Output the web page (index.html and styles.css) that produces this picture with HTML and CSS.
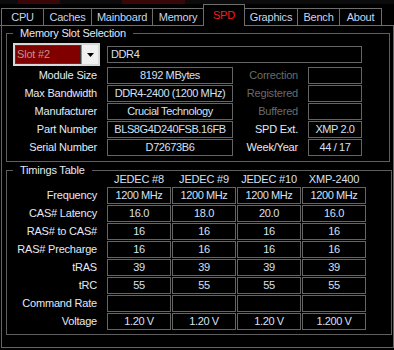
FILE: index.html
```html
<!DOCTYPE html>
<html lang="en">
<head>
  <meta charset="UTF-8">
  <meta name="viewport" content="width=device-width, initial-scale=1.0">
  <link rel="stylesheet" href="styles.css">
</head>
<body>
  <div class="window">
    <div class="topstrip"></div>

    <div class="tabs">
      <div class="tab-edge"></div>
      <div class="tab tab-cpu">CPU</div>
      <div class="tab tab-caches">Caches</div>
      <div class="tab tab-mainboard">Mainboard</div>
      <div class="tab tab-memory">Memory</div>
      <div class="tab tab-spd active">SPD</div>
      <div class="tab tab-graphics">Graphics</div>
      <div class="tab tab-bench">Bench</div>
      <div class="tab tab-about">About</div>
      <div class="tab-fill"></div>
    </div>

    <div class="panel">
      <fieldset class="group slots">
        <legend>Memory Slot Selection</legend>

        <div class="slot-row">
          <div class="select">
            <div class="select-value">Slot #2</div>
            <div class="select-arrow">
              <svg width="7" height="4" viewBox="0 0 7 4"><polygon points="0,0 7,0 3.5,4" fill="#000"/></svg>
            </div>
          </div>
          <div class="field w-type">DDR4</div>
        </div>

        <div class="row">
          <div class="label">Module Size</div>
          <div class="field w-main">8192 MBytes</div>
          <div class="rlabel dim">Correction</div>
          <div class="field w-small"></div>
        </div>
        <div class="row">
          <div class="label">Max Bandwidth</div>
          <div class="field w-main">DDR4-2400 (1200 MHz)</div>
          <div class="rlabel dim">Registered</div>
          <div class="field w-small"></div>
        </div>
        <div class="row">
          <div class="label">Manufacturer</div>
          <div class="field w-main">Crucial Technology</div>
          <div class="rlabel dim">Buffered</div>
          <div class="field w-small"></div>
        </div>
        <div class="row">
          <div class="label">Part Number</div>
          <div class="field w-main">BLS8G4D240FSB.16FB</div>
          <div class="rlabel">SPD Ext.</div>
          <div class="field w-small">XMP 2.0</div>
        </div>
        <div class="row">
          <div class="label">Serial Number</div>
          <div class="field w-main">D72673B6</div>
          <div class="rlabel">Week/Year</div>
          <div class="field w-small">44 / 17</div>
        </div>
      </fieldset>

      <fieldset class="group timings">
        <legend>Timings Table</legend>

        <div class="thead">
          <div class="label"></div>
          <div class="tcell">JEDEC #8</div>
          <div class="tcell">JEDEC #9</div>
          <div class="tcell">JEDEC #10</div>
          <div class="tcell">XMP-2400</div>
        </div>
        <div class="row">
          <div class="label">Frequency</div>
          <div class="field tcell">1200 MHz</div>
          <div class="field tcell">1200 MHz</div>
          <div class="field tcell">1200 MHz</div>
          <div class="field tcell">1200 MHz</div>
        </div>
        <div class="row">
          <div class="label">CAS# Latency</div>
          <div class="field tcell">16.0</div>
          <div class="field tcell">18.0</div>
          <div class="field tcell">20.0</div>
          <div class="field tcell">16.0</div>
        </div>
        <div class="row">
          <div class="label">RAS# to CAS#</div>
          <div class="field tcell">16</div>
          <div class="field tcell">16</div>
          <div class="field tcell">16</div>
          <div class="field tcell">16</div>
        </div>
        <div class="row">
          <div class="label">RAS# Precharge</div>
          <div class="field tcell">16</div>
          <div class="field tcell">16</div>
          <div class="field tcell">16</div>
          <div class="field tcell">16</div>
        </div>
        <div class="row">
          <div class="label">tRAS</div>
          <div class="field tcell">39</div>
          <div class="field tcell">39</div>
          <div class="field tcell">39</div>
          <div class="field tcell">39</div>
        </div>
        <div class="row">
          <div class="label">tRC</div>
          <div class="field tcell">55</div>
          <div class="field tcell">55</div>
          <div class="field tcell">55</div>
          <div class="field tcell">55</div>
        </div>
        <div class="row">
          <div class="label">Command Rate</div>
          <div class="field tcell"></div>
          <div class="field tcell"></div>
          <div class="field tcell"></div>
          <div class="field tcell"></div>
        </div>
        <div class="row">
          <div class="label">Voltage</div>
          <div class="field tcell">1.20 V</div>
          <div class="field tcell">1.20 V</div>
          <div class="field tcell">1.20 V</div>
          <div class="field tcell">1.200 V</div>
        </div>
      </fieldset>
    </div>
  </div>
</body>
</html>
```

FILE: styles.css
```css
body {
  margin: 0;
  background-color: #000;
  font-family: "Liberation Sans", Arial, sans-serif;
  font-size: 11px;
  letter-spacing: -0.2px;
  color: #e4eaf7;
}

.window {
  width: 394px;
  height: 350px;
  overflow: hidden;
  background-color: #000;
}

.topstrip {
  height: 4px;
  background: linear-gradient(to right,
    #0b0b0b 0, #0b0b0b 18px,
    #3a0709 18px, #3a0709 60px,
    #0b0b0b 60px, #0b0b0b 122px,
    #3a0709 122px, #3a0709 185px,
    #0b0b0b 185px);
}

/* tab strip */
.tabs {
  display: flex;
  align-items: flex-end;
  height: 22px;
}

.tab-edge {
  width: 1px;
  border-bottom: 1px solid #6e6e6e;
}

.tab-fill {
  flex: 1;
  border-bottom: 1px solid #6e6e6e;
}

.tab {
  box-sizing: border-box;
  height: 18px;
  border: 1px solid #6e6e6e;
  text-align: center;
  line-height: 16px;
  color: #c9d6ee;
  white-space: nowrap;
}

.tab + .tab {
  margin-left: -1px;
}

.tab.active {
  height: 22px;
  padding-top: 2px;
  border-bottom: none;
  color: #ff1a1a;
}

.tab-cpu { width: 43px; }
.tab-caches { width: 49px; }
.tab-mainboard { width: 62px; }
.tab-memory { width: 52px; }
.tab-spd { width: 42px; }
.tab-graphics { width: 54px; }
.tab-bench { width: 43px; }
.tab-about { width: 43px; }

/* main panel */
.panel {
  box-sizing: border-box;
  margin-left: 1px;
  width: 393px;
  height: 322px;
  border: 1px solid #646464;
  border-top: none;
  padding-left: 4px;
}

.group {
  box-sizing: border-box;
  margin: 0;
  padding: 0;
  min-width: 0;
  border: 1px solid #5e5e5e;
}

.group legend {
  margin-left: 6px;
  padding: 0 7px;
  line-height: 14px;
}

.slots {
  width: 384px;
  padding-bottom: 5px;
}

.timings {
  width: 386px;
  margin-top: 1px;
  padding-bottom: 4px;
}

/* rows */
.row {
  display: flex;
  height: 17px;
  margin-top: 1px;
}

.label {
  width: 90px;
  margin-right: 10px;
  text-align: right;
  line-height: 17px;
  white-space: nowrap;
}

.rlabel {
  width: 65px;
  margin-right: 10px;
  text-align: right;
  line-height: 17px;
  white-space: nowrap;
}

.rlabel.dim {
  color: #6b6b6b;
}

.field {
  box-sizing: border-box;
  height: 17px;
  border: 1px solid #646464;
  line-height: 15px;
  text-align: center;
  letter-spacing: -0.4px;
  color: #d6e0f4;
  white-space: nowrap;
  overflow: hidden;
}

.w-main { width: 126px; }
.w-small { width: 54px; }

.w-type {
  width: 255px;
  text-align: left;
  padding-left: 3px;
}

/* slot selector */
.slot-row {
  display: flex;
  align-items: center;
  height: 23px;
  margin-top: 3px;
  padding-left: 6px;
}

.select {
  box-sizing: border-box;
  display: flex;
  width: 87px;
  height: 23px;
  margin-right: 7px;
  border: 2px solid #d8d8d8;
}

.select-value {
  flex: 1;
  background-color: #800000;
  border: 1px solid #3a3a3a;
  color: #b99494;
  line-height: 17px;
  padding-left: 1px;
}

.select-arrow {
  width: 17px;
  display: flex;
  align-items: center;
  justify-content: center;
  background-color: #f0f0f0;
  border-left: 1px solid #909090;
  box-sizing: border-box;
}

/* timings table */
.thead {
  display: flex;
  height: 13px;
  margin-top: -4px;
  line-height: 13px;
}

.tcell {
  width: 64px;
  margin-right: 1px;
  text-align: center;
  color: #d6e0f4;
  white-space: nowrap;
}
```
